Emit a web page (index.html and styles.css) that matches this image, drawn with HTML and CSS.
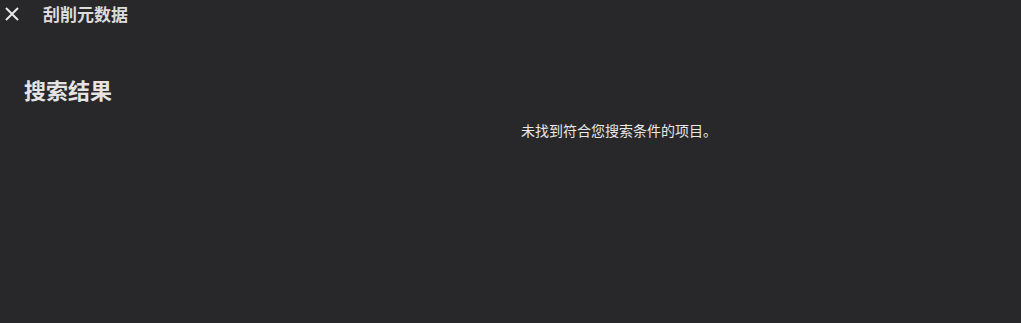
FILE: index.html
```html
<!DOCTYPE html>
<html lang="zh">
<head>
<meta charset="utf-8">
<link rel="stylesheet" href="styles.css">
</head>
<body>
<div class="page">
  <header class="topbar">
    <button class="close" aria-label="关闭">
      <svg width="14" height="14" viewBox="0 0 14 14"><path d="M1 1 L13 13 M13 1 L1 13" stroke="#e8e8e8" stroke-width="2" fill="none"/></svg>
    </button>
    <h1 class="title">刮削元数据</h1>
  </header>
  <section class="results">
    <h2 class="heading">搜索结果</h2>
    <div class="empty">未找到符合您搜索条件的项目。</div>
  </section>
</div>
</body>
</html>
```
FILE: styles.css
```css
html, body {
  margin: 0;
  padding: 0;
  background: #28282a;
  height: 100%;
}
body {
  font-family: "Noto Sans CJK SC", "Noto Sans", sans-serif;
  color: #e6e6e6;
}
.page {
  width: 1021px;
  height: 323px;
}
.topbar {
  display: flex;
  align-items: center;
  height: 30px;
}
.close {
  background: none;
  border: none;
  padding: 0;
  margin: 0 0 0 5px;
  width: 14px;
  height: 14px;
  display: flex;
  margin-top: -3px;
}
.title {
  margin: 0 0 0 24px;
  font-size: 17px;
  font-weight: 700;
  color: #dcdcdc;
  line-height: 30px;
  margin-top: -2px;
}
.results {
  padding: 44px 0 0 24px;
}
.heading {
  margin: 0;
  font-size: 22px;
  font-weight: 700;
  color: #e4e4e4;
  line-height: 30px;
}
.empty {
  margin: 16px 0 0 497px;
  font-size: 14px;
  line-height: 20px;
  color: #e8e8e8;
}
```
